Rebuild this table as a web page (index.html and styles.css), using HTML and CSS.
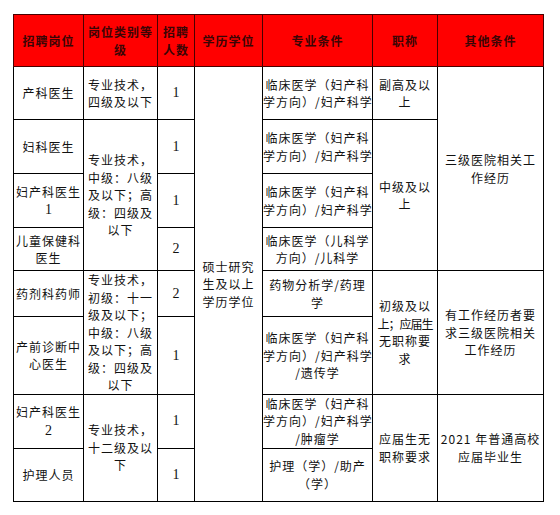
FILE: index.html
```html
<!DOCTYPE html>
<html lang="zh-CN">
<head>
<meta charset="utf-8">
<title>招聘岗位</title>
<link rel="stylesheet" href="styles.css">
</head>
<body>
<div class="wrap">
<table class="jobs">
  <colgroup>
    <col class="c1"><col class="c2"><col class="c3"><col class="c4"><col class="c5"><col class="c6"><col class="c7">
  </colgroup>
  <thead>
    <tr class="rh">
      <th>招聘岗位</th>
      <th>岗位类别等<br>级</th>
      <th>招聘<br>人数</th>
      <th>学历学位</th>
      <th>专业条件</th>
      <th>职称</th>
      <th>其他条件</th>
    </tr>
  </thead>
  <tbody>
    <tr class="r1">
      <td>产科医生</td>
      <td>专业技术，<br>四级及以下</td>
      <td class="num">1</td>
      <td rowspan="8">硕士研究<br>生及以上<br>学历学位</td>
      <td class="major">临床医学（妇产科<br>学方向）/妇产科学</td>
      <td>副高及以<br>上</td>
      <td rowspan="4">三级医院相关工<br>作经历</td>
    </tr>
    <tr class="r2">
      <td>妇科医生</td>
      <td rowspan="3">专业技术，<br>中级：八级<br>及以下；高<br>级：四级及<br>以下</td>
      <td class="num">1</td>
      <td class="major">临床医学（妇产科<br>学方向）/妇产科学</td>
      <td rowspan="3">中级及以<br>上</td>
    </tr>
    <tr class="r3">
      <td>妇产科医生<br><span class="numtxt">1</span></td>
      <td class="num">1</td>
      <td class="major">临床医学（妇产科<br>学方向）/妇产科学</td>
    </tr>
    <tr class="r4">
      <td>儿童保健科<br>医生</td>
      <td class="num">2</td>
      <td class="major">临床医学（儿科学<br>方向）/儿科学</td>
    </tr>
    <tr class="r5">
      <td>药剂科药师</td>
      <td rowspan="2">专业技术，<br>初级：十一<br>级及以下；<br>中级：八级<br>及以下；高<br>级：四级及<br>以下</td>
      <td class="num">2</td>
      <td class="major">药物分析学/药理<br>学</td>
      <td rowspan="2">初级及以<br><span class="tight">上；应届生</span><br>无职称要<br>求</td>
      <td rowspan="2">有工作经历者要<br>求三级医院相关<br>工作经历</td>
    </tr>
    <tr class="r6">
      <td>产前诊断中<br>心医生</td>
      <td class="num">1</td>
      <td class="major">临床医学（妇产科<br>学方向）/妇产科学<br>/遗传学</td>
    </tr>
    <tr class="r7">
      <td>妇产科医生<br><span class="numtxt">2</span></td>
      <td rowspan="2">专业技术，<br>十二级及以<br>下</td>
      <td class="num">1</td>
      <td class="major">临床医学（妇产科<br>学方向）/妇产科学<br>/肿瘤学</td>
      <td rowspan="2">应届生无<br>职称要求</td>
      <td rowspan="2">2021 年普通高校<br>应届毕业生</td>
    </tr>
    <tr class="r8">
      <td>护理人员</td>
      <td class="num">1</td>
      <td class="major">护理（学）/助产<br>（学）</td>
    </tr>
  </tbody>
</table>
</div>
</body>
</html>
```

FILE: styles.css
```css
html, body {
  margin: 0;
  padding: 0;
  background: #ffffff;
}

.wrap {
  padding: 14px 0 0 13px;
}

.jobs {
  border-collapse: collapse;
  table-layout: fixed;
  width: 531px;
  font-family: "Noto Sans CJK SC", "Noto Sans", sans-serif;
  font-size: 12px;
  letter-spacing: 1px;
  line-height: 17.5px;
  color: #111111;
}

.c1 { width: 70px; }
.c2 { width: 74px; }
.c3 { width: 37px; }
.c4 { width: 68px; }
.c5 { width: 110px; }
.c6 { width: 65px; }
.c7 { width: 106px; }

.jobs th,
.jobs td {
  border: 1px solid #000000;
  padding: 0;
  text-align: center;
  vertical-align: middle;
  white-space: nowrap;
  overflow: hidden;
}

.jobs th {
  background: #ff0000;
  color: #3a0505;
  font-weight: 700;
  font-size: 12px;
  line-height: 17.5px;
  border-color: #4a0000;
}

.rh { height: 52px; }
.r1 { height: 53px; }
.r2 { height: 54px; }
.r3 { height: 54px; }
.r4 { height: 43px; }
.r5 { height: 46px; }
.r6 { height: 77px; }
.r7 { height: 54px; }
.r8 { height: 53px; }

.num,
.numtxt {
  font-family: "Liberation Serif", "DejaVu Serif", serif;
  font-size: 14px;
  letter-spacing: 0;
}

.tight {
  letter-spacing: -1px;
}
```
